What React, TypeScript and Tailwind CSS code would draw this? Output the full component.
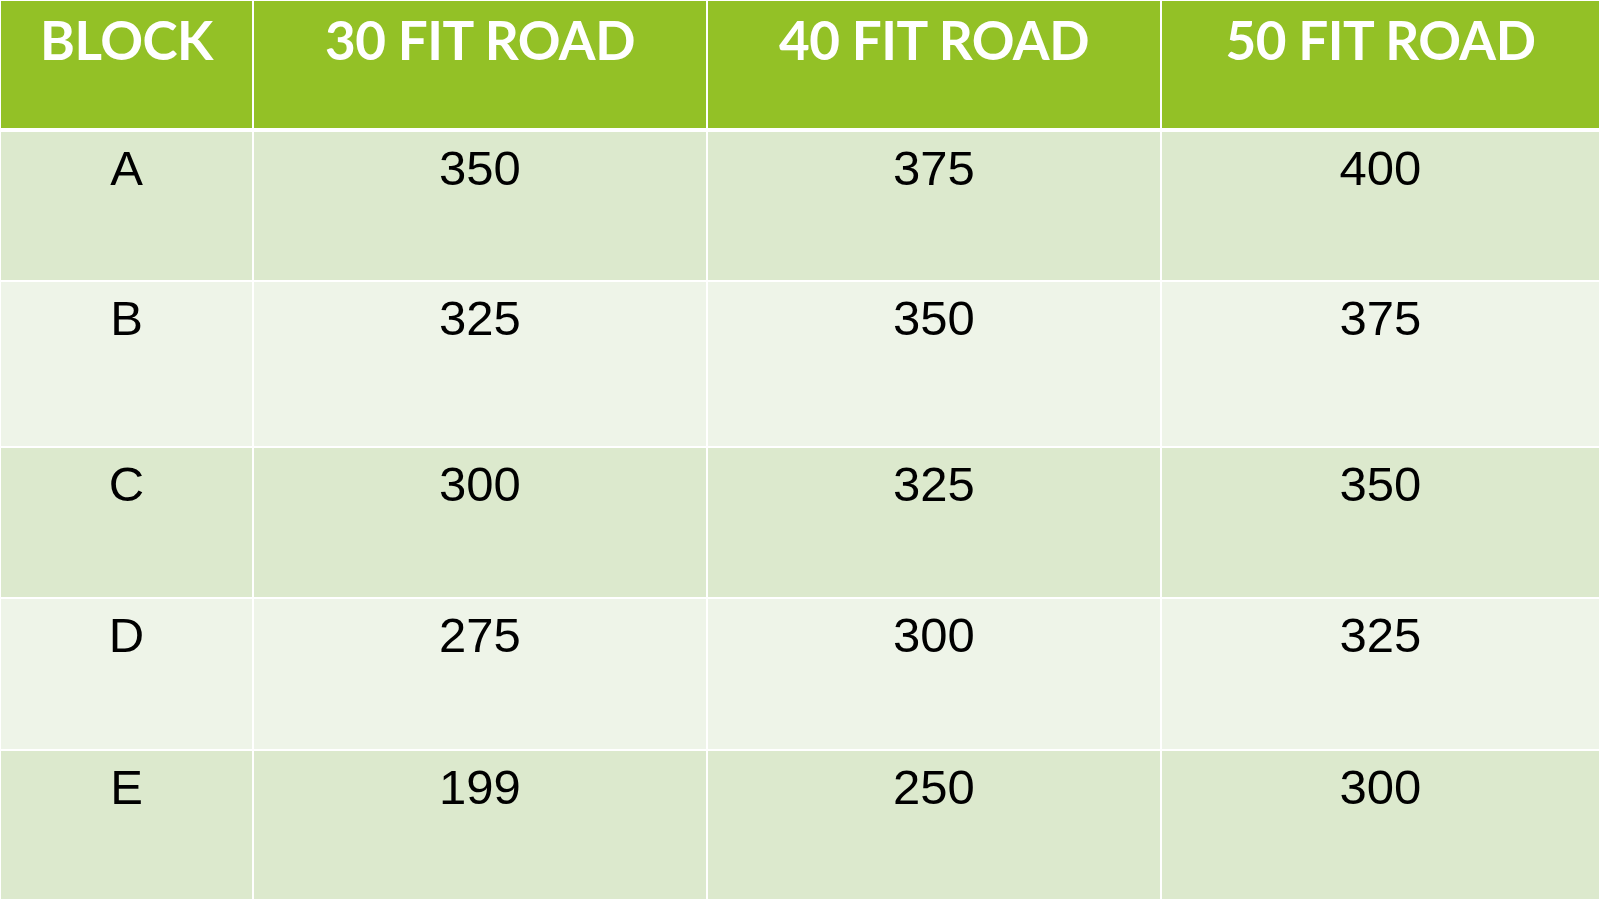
const HEADERS = ['BLOCK', '30 FIT ROAD', '40 FIT ROAD', '50 FIT ROAD'];

const ROWS = [
  { block: 'A', values: ['350', '375', '400'], h: 'h-[148px]', dark: true },
  { block: 'B', values: ['325', '350', '375'], h: 'h-[164px]', dark: false },
  { block: 'C', values: ['300', '325', '350'], h: 'h-[149px]', dark: true },
  { block: 'D', values: ['275', '300', '325'], h: 'h-[150px]', dark: false },
  { block: 'E', values: ['199', '250', '300'], h: 'h-[148px]', dark: true },
];

const COLS = 'grid grid-cols-[251px_452px_452px_1fr] gap-x-[2px]';

export default function App() {
  return (
    <div className="w-[1600px] h-[900px] bg-white p-px flex flex-col overflow-hidden">
      {/* header */}
      <div className={`${COLS} h-[128px]`}>
        {HEADERS.map((h) => (
          <div
            key={h}
            className="bg-[#93c126] text-white text-center font-bold text-[53px] leading-none tracking-[-0.5px] pt-[12px] font-['Lato',sans-serif]"
          >
            {h}
          </div>
        ))}
      </div>

      {/* body */}
      <div className="mt-[4px] flex flex-col gap-y-[2px]">
        {ROWS.map((r) => (
          <div key={r.block} className={`${COLS} ${r.h}`}>
            {[r.block, ...r.values].map((v, i) => (
              <div
                key={i}
                className={`${r.dark ? 'bg-[#dce9cd]' : 'bg-[#eef4e8]'} text-black text-center text-[49px] leading-none pt-[12px] font-['Liberation_Sans',Arial,sans-serif]`}
              >
                {v}
              </div>
            ))}
          </div>
        ))}
      </div>
    </div>
  );
}
